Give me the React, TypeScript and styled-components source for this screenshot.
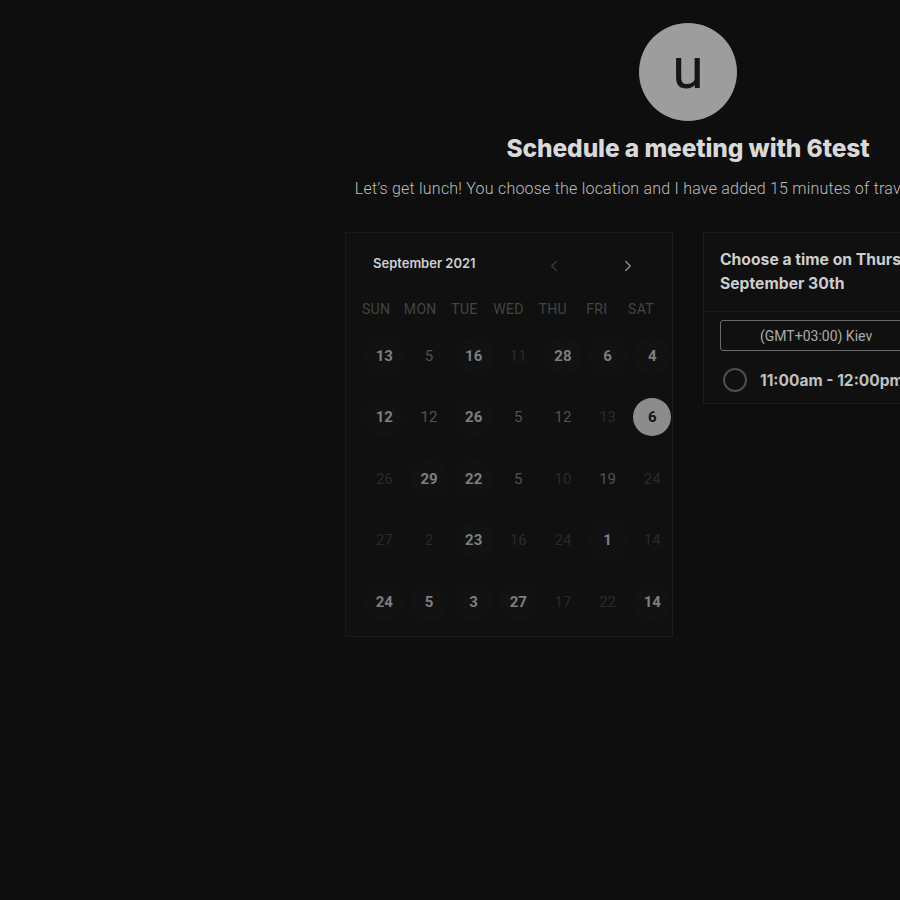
import React from "react";
import styled, { createGlobalStyle } from "styled-components";
import { ChevronLeft, ChevronRight } from "lucide-react";

const Global = createGlobalStyle`
  html, body {
    margin: 0;
    padding: 0;
    background: #0e0e0e;
    overflow: hidden;
  }
  * { box-sizing: border-box; }
`;

const Page = styled.div`
  width: 1376px;
  min-height: 900px;
  padding-top: 23px;
  display: flex;
  flex-direction: column;
  align-items: center;
  background: #0e0e0e;
`;

const Avatar = styled.div`
  width: 98px;
  height: 98px;
  border-radius: 50%;
  background: #9d9d9d;
  color: #161616;
  display: flex;
  align-items: center;
  justify-content: center;
  font-family: "Roboto", sans-serif;
  font-size: 57px;
  line-height: 1;
  padding-bottom: 8px;
`;

const Title = styled.h1`
  margin: 11px 0 0;
  font-family: "Inter", sans-serif;
  font-weight: 800;
  font-size: 24.5px;
  line-height: 32px;
  color: #d9d9d9;
  letter-spacing: -0.1px;
`;

const Subtitle = styled.p`
  margin: 13px 0 0;
  font-family: "Roboto", sans-serif;
  font-weight: 300;
  font-size: 16px;
  letter-spacing: 0.22px;
  line-height: 24px;
  color: #bdbdbd;
  white-space: nowrap;
`;

const Panels = styled.div`
  margin-top: 31px;
  display: flex;
  align-items: flex-start;
  gap: 30px;
`;

const Card = styled.div`
  width: 328px;
  border: 1px solid #1b1b1b;
  background: #101010;
`;

const Calendar = styled(Card)`
  padding: 15px 0 3px 8px;
`;

const CalHeader = styled.div`
  height: 30px;
  display: flex;
  align-items: center;
  padding-left: 19px;
`;

const MonthLabel = styled.div`
  font-family: "Inter", sans-serif;
  font-weight: 600;
  font-size: 13px;
  color: #cfcfcf;
`;

const Nav = styled.div`
  margin-left: auto;
  margin-right: 32px;
  padding-top: 6px;
  display: flex;
  gap: 50px;
`;

const NavButton = styled.button<{ $active?: boolean }>`
  width: 24px;
  height: 24px;
  padding: 0;
  border: none;
  background: transparent;
  display: flex;
  align-items: center;
  justify-content: center;
  color: ${(p) => (p.$active ? "#8a8a8a" : "#3a3a3a")};
`;

const WeekRow = styled.div`
  margin-top: 15px;
  height: 32px;
  display: grid;
  grid-template-columns: repeat(7, 44.17px);
  align-items: center;
`;

const WeekDay = styled.div`
  text-align: center;
  font-family: "Roboto", sans-serif;
  font-size: 14px;
  color: #444444;
  letter-spacing: 0.3px;
`;

const DayGrid = styled.div`
  margin-left: 8px;
  display: grid;
  grid-template-columns: repeat(7, 44.67px);
  grid-auto-rows: 61.5px;
`;

const DayCell = styled.div`
  display: flex;
  align-items: center;
  justify-content: center;
`;

type Kind = "bold" | "normal" | "faint" | "selected";

const Day = styled.div<{ $kind: Kind }>`
  width: 38px;
  height: 38px;
  border-radius: 50%;
  display: flex;
  align-items: center;
  justify-content: center;
  font-family: "Roboto", sans-serif;
  font-size: 15px;
  font-weight: ${(p) => (p.$kind === "bold" || p.$kind === "selected" ? 700 : 400)};
  color: ${(p) =>
    p.$kind === "bold"
      ? "#7e7e7e"
      : p.$kind === "normal"
      ? "#525252"
      : p.$kind === "faint"
      ? "#2a2a2a"
      : "#141414"};
  background: ${(p) =>
    p.$kind === "bold" ? "#121212" : p.$kind === "selected" ? "#8c8c8c" : "transparent"};
`;

const TimePanel = styled(Card)`
  padding-bottom: 3px;
`;

const TimeHeader = styled.div`
  padding: 15px 16px 15px 16px;
  border-bottom: 1px solid #1b1b1b;
  font-family: "Inter", sans-serif;
  font-weight: 700;
  font-size: 15.7px;
  line-height: 24px;
  color: #cdcdcd;
`;

const ZoneSelect = styled.div`
  margin: 8px 16px 0;
  height: 31px;
  border: 1px solid #6a6a6a;
  border-radius: 3px;
  padding-left: 39px;
  display: flex;
  align-items: center;
  font-family: "Roboto", sans-serif;
  font-size: 14px;
  color: #ababab;
`;

const Slot = styled.label`
  margin-top: 9px;
  height: 40px;
  padding-left: 19px;
  display: flex;
  align-items: center;
  gap: 13px;
  font-family: "Inter", sans-serif;
  font-weight: 700;
  font-size: 15.5px;
  color: #c0c0c0;
`;

const Radio = styled.span`
  width: 24px;
  height: 24px;
  border-radius: 50%;
  border: 2px solid #4e4e4e;
`;

const weekdays = ["SUN", "MON", "TUE", "WED", "THU", "FRI", "SAT"];

const days: [string, Kind][][] = [
  [["13", "bold"], ["5", "normal"], ["16", "bold"], ["11", "faint"], ["28", "bold"], ["6", "bold"], ["4", "bold"]],
  [["12", "bold"], ["12", "normal"], ["26", "bold"], ["5", "normal"], ["12", "normal"], ["13", "faint"], ["6", "selected"]],
  [["26", "faint"], ["29", "bold"], ["22", "bold"], ["5", "normal"], ["10", "faint"], ["19", "normal"], ["24", "faint"]],
  [["27", "faint"], ["2", "faint"], ["23", "bold"], ["16", "faint"], ["24", "faint"], ["1", "bold"], ["14", "faint"]],
  [["24", "bold"], ["5", "bold"], ["3", "bold"], ["27", "bold"], ["17", "faint"], ["22", "faint"], ["14", "bold"]],
];

export default function App() {
  return (
    <>
      <Global />
      <Page>
        <Avatar>u</Avatar>
        <Title>Schedule a meeting with 6test</Title>
        <Subtitle>
          Let’s get lunch! You choose the location and I have added 15 minutes of travel time each way
        </Subtitle>
        <Panels>
          <Calendar>
            <CalHeader>
              <MonthLabel>September 2021</MonthLabel>
              <Nav>
                <NavButton aria-label="Previous month">
                  <ChevronLeft size={18} strokeWidth={2} />
                </NavButton>
                <NavButton $active aria-label="Next month">
                  <ChevronRight size={18} strokeWidth={2} />
                </NavButton>
              </Nav>
            </CalHeader>
            <WeekRow>
              {weekdays.map((w) => (
                <WeekDay key={w}>{w}</WeekDay>
              ))}
            </WeekRow>
            <DayGrid>
              {days.flat().map(([n, k], i) => (
                <DayCell key={i}>
                  <Day $kind={k}>{n}</Day>
                </DayCell>
              ))}
            </DayGrid>
          </Calendar>
          <TimePanel>
            <TimeHeader>
              Choose a time on Thursday,
              <br />
              September 30th
            </TimeHeader>
            <ZoneSelect>(GMT+03:00) Kiev</ZoneSelect>
            <Slot>
              <Radio />
              11:00am - 12:00pm
            </Slot>
          </TimePanel>
        </Panels>
      </Page>
    </>
  );
}
